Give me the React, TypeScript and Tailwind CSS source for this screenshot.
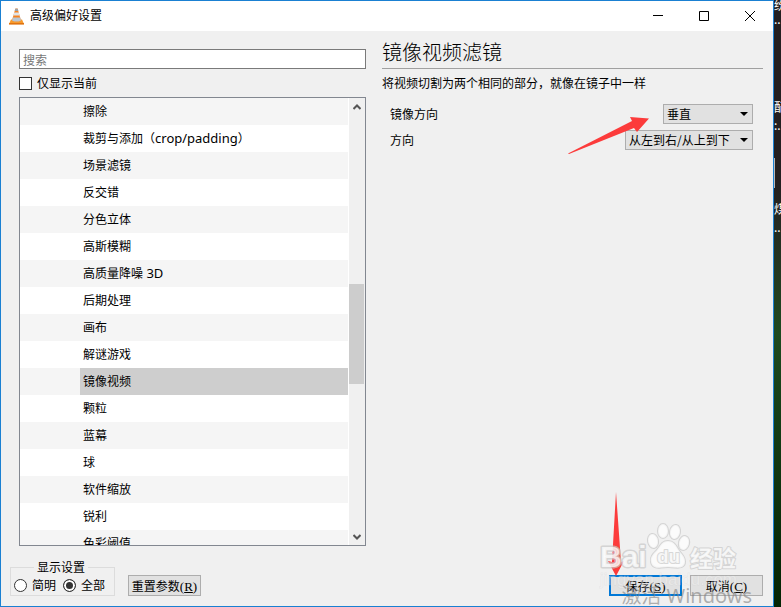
import { useState } from 'react'

const FILTERS = [
  { name: '擦除' },
  { name: '裁剪与添加', latin: 'crop/padding', wrap: true },
  { name: '场景滤镜' },
  { name: '反交错' },
  { name: '分色立体' },
  { name: '高斯模糊' },
  { name: '高质量降噪', latin: ' 3D' },
  { name: '后期处理' },
  { name: '画布' },
  { name: '解谜游戏' },
  { name: '镜像视频' },
  { name: '颗粒' },
  { name: '蓝幕' },
  { name: '球' },
  { name: '软件缩放' },
  { name: '锐利' },
  { name: '色彩阈值' },
]

type DropdownProps = {
  id: string
  label: string
  options: string[]
  width: string
}

function VlcIcon() {
  return (
    <svg width="15" height="17" viewBox="0 0 15 17" aria-hidden="true">
      <path d="M2 11.5h11l2 4.5H0z" fill="#f79a2c" />
      <path d="M0 15h15v1.6H0z" fill="#e07410" />
      <path d="M6.4.5h2.2L12 12.4q-4.5 2.4-9 0z" fill="#f58220" />
      <path d="M6.3.8h2.4l.6 2.2H5.7z" fill="#9aa3ad" />
      <path d="M5.2 4.6h4.6l.8 2.8H4.4z" fill="#dfe3e8" />
      <path d="M3.8 9.4h7.4l.8 3q-4.5 2.4-9 0z" fill="#b9c6d2" />
    </svg>
  )
}

function Dropdown({ id, label, options, width }: DropdownProps) {
  return (
    <div className="flex h-5 items-center justify-between">
      <label htmlFor={id}>{label}</label>
      <div className={`relative h-5 ${width}`}>
        <select
          id={id}
          className="block h-5 w-full appearance-none border border-[#adadad] bg-[#e1e1e1] pl-[3px] leading-[18px] outline-none"
        >
          {options.map(option => (
            <option key={option}>{option}</option>
          ))}
        </select>
        <svg
          className="pointer-events-none absolute right-[5px] top-2"
          width="8"
          height="4"
          viewBox="0 0 8 4"
          aria-hidden="true"
        >
          <path d="M0 0h8L4 4z" fill="#000" />
        </svg>
      </div>
    </div>
  )
}

function Shortcut({ letter }: { letter: string }) {
  return (
    <span className="font-['Liberation_Serif',serif] text-[13px]">
      (<u>{letter}</u>)
    </span>
  )
}

function Watermark() {
  return (
    <svg
      className="pointer-events-none absolute bottom-[14px] right-[42px]"
      width="140"
      height="72"
      viewBox="0 0 140 72"
      fill="#fff"
      fillOpacity="0.75"
      stroke="#c8c8c8"
      strokeOpacity="0.7"
      strokeWidth="3"
      paintOrder="stroke"
      strokeLinejoin="round"
      aria-hidden="true"
    >
      <text x="1" y="46" fontFamily="Liberation Sans, sans-serif" fontWeight="700" fontSize="30">Bai</text>
      <ellipse cx="54" cy="20" rx="5" ry="7" transform="rotate(-10 54 20)" strokeWidth="2" />
      <ellipse cx="64" cy="10" rx="5" ry="7" strokeWidth="2" />
      <ellipse cx="76" cy="11" rx="5" ry="7" transform="rotate(10 76 11)" strokeWidth="2" />
      <ellipse cx="85" cy="22" rx="5" ry="7" transform="rotate(14 85 22)" strokeWidth="2" />
      <path
        d="M69 20c-6 0-8 5-11 9-4 4-7 7-6 12 1 6 6 6 10 5.5q7-1 14 0c5 .5 10 0 10-6 0-5-3-7-6-11-3-5-5-9.5-11-9.5z"
        strokeWidth="2"
      />
      <text
        x="58"
        y="42"
        fontFamily="Liberation Sans, sans-serif"
        fontWeight="700"
        fontSize="19"
        strokeWidth="2"
      >
        du
      </text>
      <text x="91" y="46" fontFamily="Noto Sans CJK SC, sans-serif" fontWeight="700" fontSize="23" strokeWidth="2">经验</text>
      <text x="1" y="64" fontFamily="Liberation Sans, sans-serif" fontSize="17" strokeWidth="1" fillOpacity="0.35" strokeOpacity="0.25">
        jingyan.baidu.com
      </text>
    </svg>
  )
}

export default function App() {
  const [selected, setSelected] = useState('镜像视频')
  const [mode, setMode] = useState('all')

  return (
    <div className="relative flex h-screen overflow-hidden font-['Noto_Sans_CJK_SC',sans-serif] text-[12px] leading-[18px] text-black">
      <main className="flex min-w-0 flex-1 flex-col border border-[#1a80d2] bg-[#f0f0f0]">
        {/* Title bar */}
        <header className="flex h-[30px] shrink-0 items-center bg-white pl-2">
          <VlcIcon />
          <h1 className="ml-[6px] flex-1 font-['Noto_Sans','Noto_Sans_CJK_SC',sans-serif]">高级偏好设置</h1>
          <div className="flex h-full">
            <button type="button" aria-label="最小化" className="flex w-[46px] items-center justify-center">
              <svg width="10" height="10" viewBox="0 0 10 10"><path d="M0 4.5h10" stroke="#000" /></svg>
            </button>
            <button type="button" aria-label="最大化" className="flex w-[46px] items-center justify-center">
              <svg width="10" height="10" viewBox="0 0 10 10"><path d="M.5.5h9v9h-9z" fill="none" stroke="#000" /></svg>
            </button>
            <button type="button" aria-label="关闭" className="flex w-[46px] items-center justify-center">
              <svg width="10" height="10" viewBox="0 0 10 10"><path d="M0 0l10 10M10 0L0 10" stroke="#000" /></svg>
            </button>
          </div>
        </header>

        <div className="flex min-h-0 flex-1 pl-[18px] pr-[10px]">
          {/* Filter tree */}
          <section className="flex w-[347px] shrink-0 flex-col pt-[18px]">
            <input
              type="text"
              aria-label="搜索"
              placeholder="搜索"
              className="h-5 shrink-0 border border-[#7a7a7a] bg-white px-[3px] outline-none placeholder:text-[#777777]"
            />
            <label className="mt-[5px] flex h-[18px] shrink-0 items-center gap-[5px]">
              <input type="checkbox" className="h-[13px] w-[13px] appearance-none border border-[#333333] bg-white checked:bg-[#333333] checked:shadow-[inset_0_0_0_2px_white]" />
              仅显示当前
            </label>
            <div className="mt-[5px] flex min-h-0 flex-1 border border-[#828790] bg-white font-['Noto_Sans','Noto_Sans_CJK_SC',sans-serif]">
              <ul className="min-w-0 flex-1 overflow-hidden">
                {FILTERS.map(({ name, latin, wrap }) => (
                  <li key={name} className="pl-[60px] odd:bg-[#f5f5f5]">
                    <button
                      type="button"
                      onClick={() => setSelected(name)}
                      className={`block h-[27px] w-full whitespace-pre pl-[3px] text-left ${selected === name ? 'bg-[#cecece]' : ''}`}
                    >
                      {name}
                      {wrap && '（'}
                      {latin && <span className="text-[13px]">{latin}</span>}
                      {wrap && '）'}
                    </button>
                  </li>
                ))}
              </ul>
              <div className="ml-px flex w-4 flex-col items-center bg-[#f0f0f0]" aria-hidden="true">
                <svg className="mt-[6px] shrink-0" width="8" height="6" viewBox="0 0 8 6">
                  <path d="M.5 5L4 1.5 7.5 5" fill="none" stroke="#555" strokeWidth="2" />
                </svg>
                <div className="grow-[174]" />
                <div className="mr-px w-[15px] grow-[100] bg-[#cdcdcd]" />
                <div className="grow-[150]" />
                <svg className="mb-[5px] shrink-0" width="8" height="6" viewBox="0 0 8 6">
                  <path d="M.5 1L4 4.5 7.5 1" fill="none" stroke="#555" strokeWidth="2" />
                </svg>
              </div>
            </div>
          </section>

          {/* Filter settings */}
          <section className="ml-4 min-w-0 flex-1 pt-2">
            <h2 className="h-[30px] border-b border-[#a0a0a0] text-[20px] font-light leading-[26px]">
              镜像视频滤镜
            </h2>
            <p className="mt-[5px]">将视频切割为两个相同的部分，就像在镜子中一样</p>
            <div className="mt-3 flex flex-col gap-[6px] pl-2 pr-[10px]">
              <Dropdown id="mirror-orientation" label="镜像方向" options={['垂直', '水平']} width="w-[90px]" />
              <Dropdown
                id="mirror-direction"
                label="方向"
                options={['从左到右/从上到下', '从右到左/从下到上']}
                width="w-32"
              />
            </div>
          </section>
        </div>

        {/* Footer */}
        <footer className="flex shrink-0 items-end pb-[10px] pl-[9px] pr-[10px] pt-3">
          <fieldset className="h-[38px] w-[105px] border border-[#dcdcdc] px-[3px]">
            <legend className="ml-5 px-[3px]">显示设置</legend>
            <div className="flex items-center gap-[7px]">
              <label className="flex items-center gap-[5px]">
                <input
                  type="radio"
                  name="mode"
                  checked={mode === 'simple'}
                  onChange={() => setMode('simple')}
                  className="h-[13px] w-[13px] appearance-none rounded-full border border-[#333333] bg-white checked:bg-[#333333] checked:shadow-[inset_0_0_0_2px_white]"
                />
                简明
              </label>
              <label className="flex items-center gap-[5px]">
                <input
                  type="radio"
                  name="mode"
                  checked={mode === 'all'}
                  onChange={() => setMode('all')}
                  className="h-[13px] w-[13px] appearance-none rounded-full border border-[#333333] bg-white checked:bg-[#333333] checked:shadow-[inset_0_0_0_2px_white]"
                />
                全部
              </label>
            </div>
          </fieldset>
          <button type="button" className="ml-[13px] h-[21px] w-[73px] whitespace-nowrap border border-[#adadad] bg-[#e1e1e1] leading-[19px]">
            重置参数<Shortcut letter="R" />
          </button>
          <button type="button" className="ml-auto h-[21px] w-[73px] border-2 border-[#0078d7] bg-[#e1e1e1] leading-[17px]">
            保存<Shortcut letter="S" />
          </button>
          <button type="button" className="ml-2 h-[21px] w-[73px] border border-[#adadad] bg-[#e1e1e1] leading-[19px]">
            取消<Shortcut letter="C" />
          </button>
        </footer>
      </main>

      {/* Desktop showing behind the window */}
      <aside
        className="flex w-[7px] shrink-0 flex-col overflow-hidden whitespace-nowrap bg-linear-to-b from-[#231f20] from-30% via-[#1d4a20] via-55% to-[#042404] text-white"
        aria-hidden="true"
      >
        <span className="-mt-1">纷</span>
        <span className="-mt-1">..</span>
        <span className="mt-[70px]">配</span>
        <span>:.</span>
        <span className="mt-6 h-[30px] w-px bg-[#b8b8b8]" />
        <span className="mt-3">煤</span>
        <span>..</span>
      </aside>

      {/* Arrows */}
      <svg className="pointer-events-none absolute right-[131px] top-[116px]" width="82" height="38" viewBox="0 0 82 38" aria-hidden="true">
        <path d="M0 37.5L64 5 62 1l19 1.5L69 16l-3-4L1 38z" fill="#fc3b3b" />
      </svg>
      <svg className="pointer-events-none absolute bottom-[30px] right-[156px]" width="17" height="86" viewBox="0 0 17 86" aria-hidden="true">
        <path d="M8 1l5 70 3-1-8 15L0 70l4 1z" fill="#fc3b3b" />
      </svg>

      <Watermark />
      <p className="pointer-events-none absolute bottom-0 right-[29px] font-['Noto_Sans','Noto_Sans_CJK_SC',sans-serif] text-[20px] leading-[22px] text-[#808080]/60">
        激活 Windows
      </p>
    </div>
  )
}
